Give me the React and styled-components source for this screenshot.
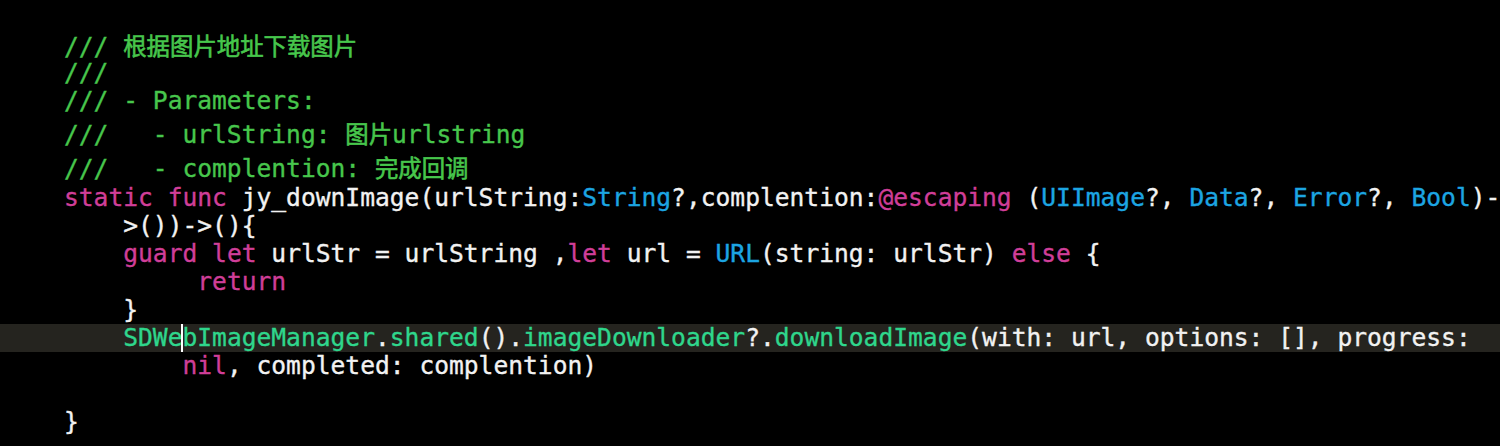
import React from 'react';
import styled, { createGlobalStyle } from 'styled-components';

const GlobalStyle = createGlobalStyle`
  html, body {
    margin: 0;
    padding: 0;
    background: #000;
    overflow: hidden;
  }
`

const colors = {
  plain: '#f2f2f2',
  comment: '#47c64c',
  keyword: '#d03e98',
  type: '#1ca5e2',
  project: '#2fd68c',
}

const Editor = styled.div`
  width: 1500px;
  height: 446px;
  background: #000;
  padding-top: 31px;
  box-sizing: border-box;
  font-family: 'DejaVu Sans Mono', 'Noto Sans CJK SC', monospace;
  font-size: 24.6px;
  color: ${colors.plain};
  -webkit-text-stroke: 0.35px currentColor;
  overflow: hidden;
`

const Line = styled.div`
  height: 28px;
  line-height: 28px;
  margin-top: ${(p) => p.$push || 0}px;
  padding-left: 64px;
  white-space: pre;
  background: ${(p) => (p.$current ? '#25241f' : 'transparent')};
`

const Tok = styled.span`
  color: ${(p) => colors[p.$k] || colors.plain};
`

const Han = styled.span`
  font-family: 'Noto Sans CJK SC', sans-serif;
  font-size: 23.4px;
  -webkit-text-stroke: 0.6px currentColor;
`

const Caret = styled.span`
  display: inline-block;
  width: 0;
  height: 28px;
  vertical-align: top;
  border-left: 2px solid #fff;
  margin: 0 -1px;
`

const C = ({ children }) => <Tok $k="comment">{children}</Tok>
const K = ({ children }) => <Tok $k="keyword">{children}</Tok>
const T = ({ children }) => <Tok $k="type">{children}</Tok>
const P = ({ children }) => <Tok $k="project">{children}</Tok>

export default function App() {
  return (
    <>
      <GlobalStyle />
      <Editor>
        <Line><C>/// <Han>根据图片地址下载图片</Han></C></Line>
        <Line><C>///</C></Line>
        <Line><C>/// - Parameters:</C></Line>
        <Line $push={4}><C>///   - urlString: <Han>图片</Han>urlstring</C></Line>
        <Line $push={6}><C>///   - complention: <Han>完成回调</Han></C></Line>
        <Line $push={3}>
          <K>static</K> <K>func</K> jy_downImage(urlString:<T>String</T>?,complention:<K>@escaping</K> (<T>UIImage</T>?, <T>Data</T>?, <T>Error</T>?, <T>Bool</T>)-
        </Line>
        <Line>{'    '}&gt;())-&gt;(){'{'}</Line>
        <Line>
          {'    '}<K>guard</K> <K>let</K> urlStr = urlString ,<K>let</K> url = <T>URL</T>(string: urlStr) <K>else</K> {'{'}
        </Line>
        <Line>{'         '}<K>return</K></Line>
        <Line>{'    }'}</Line>
        <Line $current>
          {'    '}<P>SDWe</P><Caret /><P>bImageManager</P>.<P>shared</P>().<P>imageDownloader</P>?.<P>downloadImage</P>(with: url, options: [], progress:
        </Line>
        <Line>{'        '}<K>nil</K>, completed: complention)</Line>
        <Line />
        <Line>{'}'}</Line>
      </Editor>
    </>
  );
}
